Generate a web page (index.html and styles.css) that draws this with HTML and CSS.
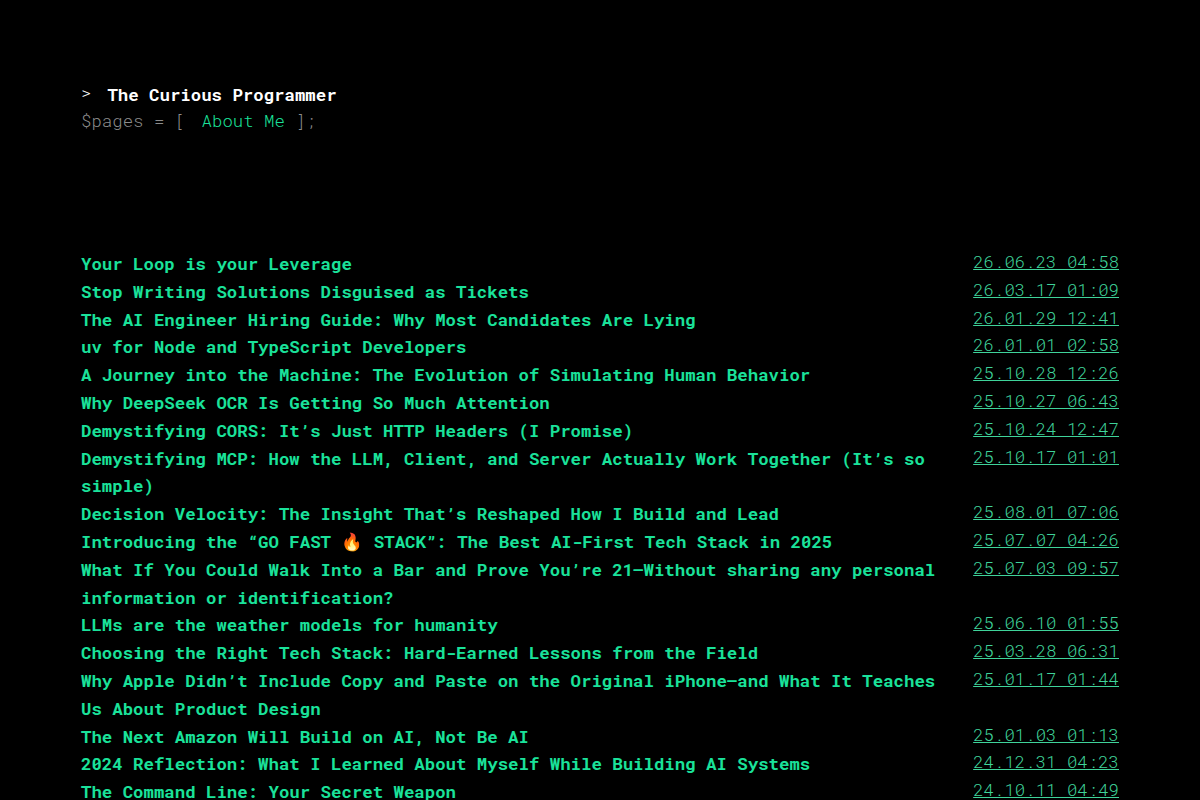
FILE: index.html
```
<!DOCTYPE html>
<html lang="en">
<head>
    <meta charset="UTF-8">
    <meta name="viewport" content="width=device-width, initial-scale=1.0">
    <title>The Curious Programmer</title>
    <link rel="stylesheet" href="styles.css">
</head>
<body>
    <header class="site-header">
        <h1 class="site-title"><span class="prompt">&gt;</span>The Curious Programmer</h1>
        <nav class="site-nav">$pages = [ <a class="page-link" href="#">About Me</a> ];</nav>
    </header>

    <main class="posts">
        <article class="post"><a class="title" href="#">Your Loop is your Leverage</a><a class="date" href="#">26.06.23 04:58</a></article>
        <article class="post"><a class="title" href="#">Stop Writing Solutions Disguised as Tickets</a><a class="date" href="#">26.03.17 01:09</a></article>
        <article class="post"><a class="title" href="#">The AI Engineer Hiring Guide: Why Most Candidates Are Lying</a><a class="date" href="#">26.01.29 12:41</a></article>
        <article class="post"><a class="title" href="#">uv for Node and TypeScript Developers</a><a class="date" href="#">26.01.01 02:58</a></article>
        <article class="post"><a class="title" href="#">A Journey into the Machine: The Evolution of Simulating Human Behavior</a><a class="date" href="#">25.10.28 12:26</a></article>
        <article class="post"><a class="title" href="#">Why DeepSeek OCR Is Getting So Much Attention</a><a class="date" href="#">25.10.27 06:43</a></article>
        <article class="post"><a class="title" href="#">Demystifying CORS: It’s Just HTTP Headers (I Promise)</a><a class="date" href="#">25.10.24 12:47</a></article>
        <article class="post"><a class="title" href="#">Demystifying MCP: How the LLM, Client, and Server Actually Work Together (It’s so simple)</a><a class="date" href="#">25.10.17 01:01</a></article>
        <article class="post"><a class="title" href="#">Decision Velocity: The Insight That’s Reshaped How I Build and Lead</a><a class="date" href="#">25.08.01 07:06</a></article>
        <article class="post"><a class="title" href="#">Introducing the “GO FAST 🔥 STACK”: The Best AI-First Tech Stack in 2025</a><a class="date" href="#">25.07.07 04:26</a></article>
        <article class="post"><a class="title" href="#">What If You Could Walk Into a Bar and Prove You’re 21—Without sharing any personal information or identification?</a><a class="date" href="#">25.07.03 09:57</a></article>
        <article class="post"><a class="title" href="#">LLMs are the weather models for humanity</a><a class="date" href="#">25.06.10 01:55</a></article>
        <article class="post"><a class="title" href="#">Choosing the Right Tech Stack: Hard-Earned Lessons from the Field</a><a class="date" href="#">25.03.28 06:31</a></article>
        <article class="post"><a class="title" href="#">Why Apple Didn’t Include Copy and Paste on the Original iPhone—and What It Teaches Us About Product Design</a><a class="date" href="#">25.01.17 01:44</a></article>
        <article class="post"><a class="title" href="#">The Next Amazon Will Build on AI, Not Be AI</a><a class="date" href="#">25.01.03 01:13</a></article>
        <article class="post"><a class="title" href="#">2024 Reflection: What I Learned About Myself While Building AI Systems</a><a class="date" href="#">24.12.31 04:23</a></article>
        <article class="post"><a class="title" href="#">The Command Line: Your Secret Weapon</a><a class="date" href="#">24.10.11 04:49</a></article>
    </main>
</body>
</html>
```

FILE: styles.css
```
* {
    box-sizing: border-box;
}

html {
    overflow: hidden;
}

body {
    margin: 0;
    padding: 81px;
    background: #000;
    color: #8c8c8c;
    font-family: "Roboto Mono", "DejaVu Sans Mono", "Liberation Mono", monospace;
    font-size: 17.36px;
    font-weight: 300;
    line-height: 27.8px;
}

a {
    color: #1ae29a;
    text-decoration: none;
}

.site-header {
    height: 169px;
}

.site-title {
    display: flex;
    margin: 0;
    color: #fff;
    font-size: 17.36px;
    line-height: 27.8px;
}

.prompt {
    margin-right: 16px;
    font-weight: 300;
    line-height: 24px;
}

.site-nav {
    line-height: 24.5px;
}

.page-link {
    margin-left: 6px;
}

.post {
    display: flex;
    justify-content: space-between;
}

.title {
    width: 868px;
    font-weight: 700;
}

.date {
    color: #3fd39a;
    line-height: 23.8px;
    text-decoration: underline;
    white-space: nowrap;
}
```
